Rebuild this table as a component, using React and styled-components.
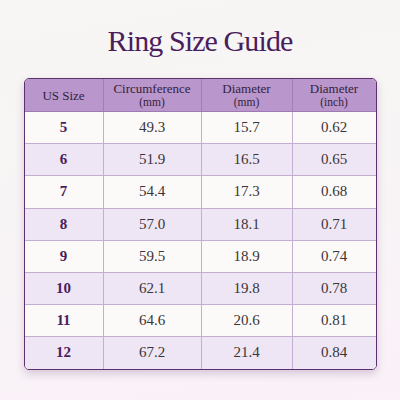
import React from "react";
import styled, { createGlobalStyle } from "styled-components";

const GlobalStyle = createGlobalStyle`
  html, body {
    margin: 0;
    padding: 0;
  }
  body {
    width: 400px;
    height: 400px;
    overflow: hidden;
    background: linear-gradient(170deg, #f7f6f4 0%, #f8f4f6 60%, #fbf1f9 100%);
    font-family: "Liberation Serif", "DejaVu Serif", serif;
  }
`;

const Page = styled.div`
  width: 400px;
  height: 400px;
  display: flex;
  flex-direction: column;
  align-items: center;
`;

const Title = styled.h1`
  margin: 23px 0 0;
  height: 55px;
  font-size: 30px;
  font-weight: 400;
  letter-spacing: -0.9px;
  color: #4a1d5c;
  line-height: 36px;
`;

const Table = styled.div`
  width: 351px;
  border: 1.5px solid #5d3070;
  border-radius: 5px;
  overflow: hidden;
  box-shadow: 0 4px 9px rgba(90, 50, 100, 0.22);
  display: grid;
  grid-template-columns: 78px 98px 91px 1fr;
`;

const HeadCell = styled.div`
  height: 32px;
  background: #b996cc;
  color: #33233a;
  display: flex;
  flex-direction: column;
  align-items: center;
  justify-content: center;
  gap: 1px;
  border-left: ${(p) => (p.first ? "none" : "1px solid #a07fb5")};
  border-bottom: 1px solid #9d7bb2;
  font-size: 13px;
  line-height: 13px;
`;

const Unit = styled.span`
  font-size: 11.5px;
  line-height: 12px;
`;

const Cell = styled.div`
  height: 31.2px;
  display: flex;
  align-items: center;
  justify-content: center;
  background: ${(p) => (p.alt ? "#eee6f4" : "#fbfaf8")};
  border-left: ${(p) => (p.first ? "none" : "1px solid #c3aed2")};
  border-top: ${(p) => (p.top ? "none" : "1px solid #c3aed2")};
  font-size: 15px;
  color: ${(p) => (p.first ? "#4a1d5c" : "#3b3539")};
  font-weight: ${(p) => (p.first ? 700 : 400)};
`;

const headers = [
  ["US Size"],
  ["Circumference", "(mm)"],
  ["Diameter", "(mm)"],
  ["Diameter", "(inch)"],
];

const rows = [
  ["5", "49.3", "15.7", "0.62"],
  ["6", "51.9", "16.5", "0.65"],
  ["7", "54.4", "17.3", "0.68"],
  ["8", "57.0", "18.1", "0.71"],
  ["9", "59.5", "18.9", "0.74"],
  ["10", "62.1", "19.8", "0.78"],
  ["11", "64.6", "20.6", "0.81"],
  ["12", "67.2", "21.4", "0.84"],
];

export default function App() {
  return (
    <Page>
      <GlobalStyle />
      <Title>Ring Size Guide</Title>
      <Table>
        {headers.map((h, i) => (
          <HeadCell key={i} first={i === 0}>
            <span>{h[0]}</span>
            {h[1] && <Unit>{h[1]}</Unit>}
          </HeadCell>
        ))}
        {rows.map((r, ri) =>
          r.map((v, ci) => (
            <Cell key={ri + "-" + ci} alt={ri % 2 === 1} first={ci === 0} top={ri === 0}>
              {v}
            </Cell>
          ))
        )}
      </Table>
    </Page>
  );
}
